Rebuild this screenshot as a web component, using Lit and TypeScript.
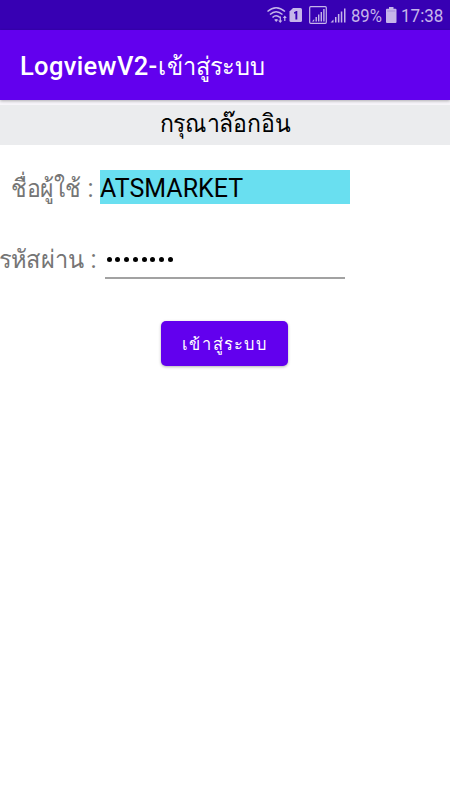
import { LitElement, html, css } from "lit";
import { customElement } from "lit/decorators.js";

@customElement("status-bar")
class StatusBar extends LitElement {
  static styles = css`
    :host { display: flex; height: 30px; background: #3700b3; justify-content: flex-end; color: #c5b5ea; font-size: 18.500px; line-height: 32px; }
    svg { display: block; width: 82px; height: 30px; flex: none; margin-right: 3px; }
    .battery { width: 14px; margin: 0 3px 0 2px; }
    .num { display: block; white-space: nowrap; transform: scaleX(0.9); transform-origin: 0 50%; }
    .pct { width: 31px; }
    .time { width: 49px; transform: scaleX(0.92); }
  `;
  render() {
    return html`
      <svg viewBox="266 0 82 30" fill="#c5b5ea">
        <g fill="none" stroke="#c5b5ea" stroke-width="1.5">
          <path d="M267.500 11.500Q276 4 285 11.500" />
          <path d="M270 14.500Q276 9 282.500 14.500" />
          <path d="M272.500 17.500Q276 14 280 17.500" />
        </g>
        <path d="M274.200 19.800Q276.200 18 278.200 19.800L276.200 22Z" />
        <path d="M279.700 16.500h1.200v4h1.500l-2.100 2.500-2.100-2.500h1.500zM284.200 21v-3h-1.400l2-2.500 2 2.500h-1.400v3z" />
        <path d="M293 8h7.500a1.500 1.500 0 0 1 1.500 1.500v11a1.500 1.500 0 0 1-1.500 1.500h-9.500a1.500 1.500 0 0 1-1.500-1.500v-9z" />
        <path d="M294 12.300l2.300-1.300h1v8.500h-1.900v-6.300l-1.400.6z" fill="#3700b3" />
        <rect x="309.700" y="6.700" width="16.600" height="16.600" rx="1" fill="none" stroke="#c5b5ea" stroke-width="1.200" />
        <path d="M312 21.500l2.200-2.500v2.500zM315.500 17h1.400v4.500h-1.400zM318 14.500h1.400v7H318zM320.600 12h1.400v9.500h-1.400zM323.200 9h1.400v12.500h-1.400z" />
        <path d="M330.500 22.500l3-3v3zM335 17h1.500v5.500H335zM337.900 14h1.500v8.500h-1.500zM340.800 11.500h1.500v11h-1.500zM344 8.500h1.500v14H344z" />
      </svg>
      <span class="num pct">89%</span>
      <svg class="battery" viewBox="384 0 14 30" fill="#c5b5ea">
        <path d="M389 7h4.500v1.700h2a1 1 0 0 1 1 1V22a1 1 0 0 1-1 1h-8.500a1 1 0 0 1-1-1V9.700a1 1 0 0 1 1-1h2z" />
        <path d="M387.200 11h8" stroke="#a48fdc" stroke-width="1" />
      </svg>
      <span class="num time">17:38</span>
    `;
  }
}

@customElement("app-root")
class AppRoot extends LitElement {
  static styles = css`
    :host { display: block; width: 450px; height: 800px; background: #fff; font-family: Roboto, "Noto Sans", sans-serif; overflow: hidden; }
    .thai { display: inline-block; font-size: 25px; transform: scaleX(0.92); transform-origin: 0 50%; white-space: nowrap; }
    .bar { height: 70px; background: #6200ee; line-height: 73px; padding-left: 20px; color: #fff; font-size: 25px; font-weight: 500; box-shadow: 0 1px 3px rgba(0, 0, 0, 0.3); position: relative; }
    .latin { font-size: 25.500px; letter-spacing: 0.350px; }
    .bar .thai { transform: scaleX(0.945); }
    .head { height: 40px; border-top: 5px solid #f7f5fa; background: #ebecee; text-align: center; line-height: 37px; color: #000; }
    .head .thai { transform-origin: 50% 50%; }
    .row { display: flex; height: 34px; font-size: 25px; line-height: 34px; color: #757575; white-space: pre; }
    .user { margin-top: 25px; }
    .pass { margin-top: 38px; height: 37px; }
    .label { display: flex; box-sizing: border-box; }
    .user .label { width: 100px; padding-left: 11px; line-height: 37px; }
    .pass .label { width: 106px; margin-left: -1px; line-height: 35px; }
    .user .thai { width: 70px; }
    .pass .thai { width: 85px; transform: scaleX(0.945); }
    .colon { padding-left: 6.500px; }
    .name { width: 250px; height: 34px; line-height: 37px; background: #69dff0; color: #000; }
    .secret { width: 240px; height: 37px; border-bottom: 2px solid #a2a2a2; display: flex; align-items: center; gap: 3.800px; box-sizing: border-box; padding: 0 0 1px 1.500px; }
    .dot { width: 5px; height: 5px; border-radius: 50%; background: #000; }
    .btn { width: 127px; height: 45px; margin: 42px 0 0 161px; background: #6200ee; color: #fff; border-radius: 5px; line-height: 47px; text-align: center; box-shadow: 0 1px 3px rgba(0, 0, 0, 0.3); }
    .btn .thai { font-size: 17px; letter-spacing: 1.500px; margin-right: -1.500px; transform: scaleX(0.965); transform-origin: 50% 50%; }
  `;
  render() {
    return html`
      <status-bar></status-bar>
      <div class="bar"><span class="latin">LogviewV2-</span><span class="thai">เข้าสู่ระบบ</span></div>
      <div class="head"><span class="thai">กรุณาล๊อกอิน</span></div>
      <div class="row user"><span class="label"><span class="thai">ชื่อผู้ใช้</span><span class="colon">:</span></span><span class="name">ATSMARKET</span></div>
      <div class="row pass"><span class="label"><span class="thai">รหัสผ่าน</span><span class="colon">:</span></span><span class="secret">${Array.from({ length: 8 }, () => html`<i class="dot"></i>`)}</span></div>
      <div class="btn"><span class="thai">เข้าสู่ระบบ</span></div>
    `;
  }
}
